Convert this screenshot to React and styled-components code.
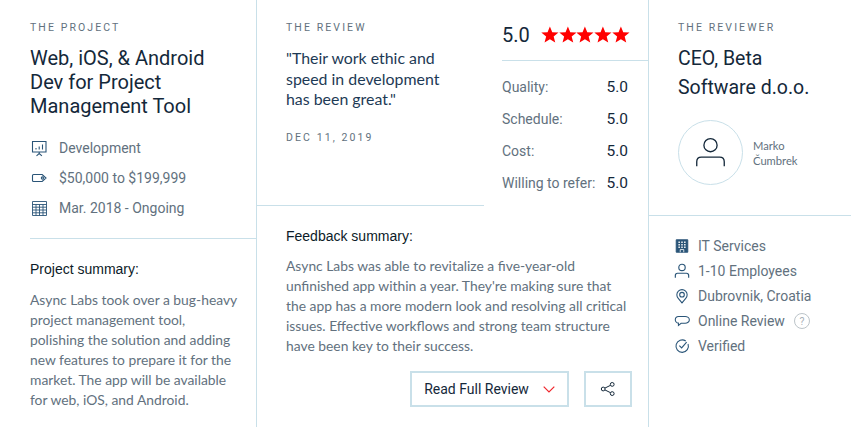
import React from 'react'
import styled, { createGlobalStyle } from 'styled-components'

const Global = createGlobalStyle`
  html, body { margin: 0; padding: 0; background: #fff; }
  body { font-family: Roboto, sans-serif; overflow: hidden; text-rendering: optimizeLegibility; }
`

const LINE = '#c9e0e9'
const INK = '#14283a'
const GREY = '#62717e'
const BLUE = '#2a5578'

const Page = styled.div`
  width: 851px;
  height: 427px;
  display: flex;
  overflow: hidden;
`

const Column = styled.section`
  width: ${p => p.$width}px;
  flex: none;
  border-right: ${p => (p.$last ? 'none' : `1px solid ${LINE}`)};
  box-sizing: border-box;
`

const Block = styled.div`
  padding: ${p => p.$pad};
  border-bottom: ${p => (p.$line ? `1px solid ${LINE}` : 'none')};
  margin: ${p => p.$margin || 0};
`

const Eyebrow = styled.div`
  font-size: 10.5px;
  line-height: 14px;
  letter-spacing: 2.1px;
  color: ${GREY};
  text-transform: uppercase;
`

const Title = styled.h2`
  margin: ${p => p.$top}px 0 0;
  font-weight: 400;
  font-size: ${p => p.$size}px;
  line-height: ${p => p.$leading}px;
  color: ${INK};
`

const Facts = styled.ul`
  list-style: none;
  margin: ${p => p.$margin || 0};
  padding: 0;
  display: flex;
  flex-direction: column;
  gap: ${p => p.$gap}px;
`

const Fact = styled.li`
  display: flex;
  align-items: center;
  gap: ${p => p.$gap}px;
  height: 20px;
  font-size: 14px;
  color: ${GREY};
  white-space: nowrap;
  svg { flex: none; }
`

const SubHead = styled.h3`
  margin: 0;
  font-family: "Liberation Sans", Arial, sans-serif;
  font-weight: 400;
  font-size: 14px;
  line-height: 20px;
  color: #0c1b28;
`

const Body = styled.p`
  margin: ${p => p.$margin};
  font-family: Lato, sans-serif;
  font-size: 13.85px;
  line-height: 20px;
  color: ${GREY};
`

const ReviewTop = styled.div`
  display: flex;
  height: 206px;
`

const QuoteSide = styled.div`
  width: 227px;
  flex: none;
  box-sizing: border-box;
  padding: 21px 28px 0 29px;
  height: 206px;
  border-bottom: 1px solid ${LINE};
`

const Quote = styled.blockquote`
  margin: 13px 0 0;
  font-family: Lato, sans-serif;
  font-size: 15.9px;
  line-height: 20.5px;
  color: #1d3a55;
`

const ReviewDate = styled.div`
  margin-top: 21px;
  font-size: 10.5px;
  line-height: 14px;
  letter-spacing: 2.1px;
  color: ${GREY};
`

const RatingSide = styled.div`
  flex: 1;
  padding-left: 18px;
`

const Overall = styled.div`
  height: 61px;
  box-sizing: border-box;
  padding-top: 10px;
  display: flex;
  align-items: center;
  gap: 11px;
  font-size: 20px;
  color: ${INK};
  border-bottom: 1px solid ${LINE};
`

const Stars = styled.div`
  display: flex;
`

const Scores = styled.div`
  margin-top: 10px;
  display: flex;
  flex-direction: column;
`

const Score = styled.div`
  width: 126px;
  height: 32px;
  display: flex;
  align-items: center;
  justify-content: space-between;
  font-size: 14px;
  color: ${GREY};
  white-space: nowrap;
  b {
    font-weight: 400;
    font-size: 15.5px;
    color: ${INK};
  }
`

const Actions = styled.div`
  display: flex;
  justify-content: flex-end;
  gap: 15px;
  margin-top: 15px;
`

const Action = styled.button`
  height: 36px;
  width: ${p => p.$width}px;
  box-sizing: border-box;
  border: 2px solid ${LINE};
  background: #fff;
  padding: 0;
  display: flex;
  align-items: center;
  justify-content: center;
  gap: 14px;
  font-family: Roboto, sans-serif;
  font-size: 14px;
  color: ${INK};
`

const Person = styled.div`
  display: flex;
  align-items: center;
  gap: 10px;
  margin-top: 18px;
`

const Avatar = styled.div`
  width: 65px;
  height: 65px;
  box-sizing: border-box;
  border: 1px solid ${LINE};
  border-radius: 50%;
  display: flex;
  align-items: center;
  justify-content: center;
`

const PersonName = styled.div`
  font-family: Lato, sans-serif;
  font-size: 11.2px;
  line-height: 15px;
  color: ${GREY};
`

const Help = styled.span`
  width: 16px;
  height: 16px;
  margin-left: 1px;
  box-sizing: border-box;
  border: 1px solid #bcc4c9;
  border-radius: 50%;
  display: inline-flex;
  align-items: center;
  justify-content: center;
  font-size: 10.5px;
  color: #a8b0b6;
`

const Svg = ({ size = 18, stroke = BLUE, width = 1.1, children }) => (
  <svg width={size} height={size} viewBox="0 0 18 18" fill="none" stroke={stroke} strokeWidth={width} aria-hidden="true">
    {children}
  </svg>
)

const BoardIcon = () => (
  <Svg>
    <path d="M2 2.5h14.5M2.5 2.5v10.5h13.5V2.5M9.2 13v1.5M6.5 16.8l2.7-2.3 2.7 2.3" />
    <path d="M6 10.5V9M9.2 10.5V7.5M12.5 10.5V5.5" />
  </Svg>
)
const TagIcon = () => (
  <Svg>
    <path d="M12.2 5.5H3.5q-1 0-1 1v5q0 1 1 1h8.7l3.8-3.5z" />
    <circle cx="12.4" cy="9" r="1.1" />
  </Svg>
)
const CalendarIcon = () => (
  <Svg>
    <path d="M2.5 2.5h14v14h-14zM2.5 5.5h14M2.5 8.2h14M2.5 11h14M2.5 13.8h14M6 5.5v11M9.5 5.5v11M13 5.5v11" strokeWidth="0.9" />
  </Svg>
)
const BuildingIcon = () => (
  <Svg size={16}>
    <path d="M2.5 2h13v14h-13z" fill={BLUE} />
    <path d="M5 4.8h1.6M8.2 4.8h1.6M11.4 4.8H13M5 7.6h1.6M8.2 7.6h1.6M11.4 7.6H13M5 10.4h1.6M8.2 10.4h1.6M11.4 10.4H13" stroke="#fff" strokeWidth="1.6" />
    <path d="M7 16v-3h4v3" stroke="#fff" strokeWidth="0.9" />
  </Svg>
)
const UserIcon = ({ size = 16, width = 1.3, stroke = BLUE }) => (
  <Svg size={size} width={width} stroke={stroke}>
    <circle cx="9" cy="5" r="3.6" />
    <path d="M1.5 16.5V14c0-1.5 1-2.5 2.5-2.5h10c1.5 0 2.5 1 2.5 2.5v2.5" />
  </Svg>
)
const PinIcon = () => (
  <Svg size={16} width={1.2}>
    <path d="M9 16.8 4.8 11.6a5.8 5.8 0 1 1 8.4 0z" />
    <circle cx="9" cy="7.5" r="2.6" />
  </Svg>
)
const ChatIcon = () => (
  <Svg size={16} width={1.2}>
    <path d="M5.5 4h7a3.8 3 0 0 1 0 7.5H8L5 14v-2.6A3.8 3.7 0 0 1 5.5 4z" />
  </Svg>
)
const CheckIcon = () => (
  <Svg size={16} width={1.2}>
    <path d="M15.8 6.8a7 7 0 1 1-2.6-3.4" />
    <path d="m6 8.6 2.6 2.6 5.6-6.6" />
  </Svg>
)
const Star = () => (
  <svg width="17.8" height="17.8" viewBox="0 0 18 18" aria-hidden="true">
    <path fill="#ff0000" d="M9 .5l2.4 5.8 6.3.4-4.9 4 1.6 6.1L9 13.5l-5.4 3.3 1.6-6.1-4.9-4 6.3-.4z" />
  </svg>
)
const Chevron = () => (
  <svg width="12" height="7" viewBox="0 0 12 7" fill="none" stroke="#f0262c" strokeWidth="1.2" aria-hidden="true">
    <path d="m.7.7 5.3 5.3L11.3.7" />
  </svg>
)
const ShareIcon = () => (
  <svg width="16" height="16" viewBox="0 0 16 16" fill="none" stroke={INK} strokeWidth="1" aria-hidden="true">
    <circle cx="3.2" cy="8" r="1.9" />
    <circle cx="12.2" cy="3.4" r="1.9" />
    <circle cx="12.2" cy="12.6" r="1.9" />
    <path d="m4.9 7.1 5.6-2.8M4.9 8.9l5.6 2.8" />
  </svg>
)

const projectFacts = [
  [BoardIcon, 'Development'],
  [TagIcon, '$50,000 to $199,999'],
  [CalendarIcon, 'Mar. 2018 - Ongoing'],
]

const scores = [
  ['Quality:', '5.0'],
  ['Schedule:', '5.0'],
  ['Cost:', '5.0'],
  ['Willing to refer:', '5.0'],
]

const App = () => (
  <Page>
    <Global />
    <Column $width={257}>
      <Block $pad="21px 0 20px" $margin="0 0 0 30px" $line>
        <Eyebrow>The Project</Eyebrow>
        <Title $top={11} $size={20} $leading={24}>Web, iOS, &amp; Android<br />Dev for Project<br />Management Tool</Title>
        <Facts $margin="20px 0 0" $gap={10}>
          {projectFacts.map(([Icon, label]) => (
            <Fact key={label} $gap={11}><Icon />{label}</Fact>
          ))}
        </Facts>
      </Block>
      <Block $pad="20px 16px 0 30px">
        <SubHead>Project summary:</SubHead>
        <Body $margin="11px 0 0">
          Async Labs took over a bug-heavy project management tool, polishing the solution and adding new features to prepare it for the market. The app will be available for web, iOS, and Android.
        </Body>
      </Block>
    </Column>

    <Column $width={392}>
      <ReviewTop>
        <QuoteSide>
          <Eyebrow>The Review</Eyebrow>
          <Quote>"Their work ethic and speed in development has been great."</Quote>
          <ReviewDate>DEC 11, 2019</ReviewDate>
        </QuoteSide>
        <RatingSide>
          <Overall>
            5.0
            <Stars>
              <Star /><Star /><Star /><Star /><Star />
            </Stars>
          </Overall>
          <Scores>
            {scores.map(([label, value]) => (
              <Score key={label}>{label}<b>{value}</b></Score>
            ))}
          </Scores>
        </RatingSide>
      </ReviewTop>
      <Block $pad="20px 16px 0 29px">
        <SubHead>Feedback summary:</SubHead>
        <Body $margin="10px 0 0">
          Async Labs was able to revitalize a five-year-old unfinished app within a year. They're making sure that the app has a more modern look and resolving all critical issues. Effective workflows and strong team structure have been key to their success.
        </Body>
        <Actions>
          <Action $width={159}>Read Full Review <Chevron /></Action>
          <Action $width={48}><ShareIcon /></Action>
        </Actions>
      </Block>
    </Column>

    <Column $width={202} $last>
      <Block $pad="21px 0 0 29px">
        <Eyebrow>The Reviewer</Eyebrow>
        <Title $top={9} $size={19.5} $leading={29}>CEO, Beta<br />Software d.o.o.</Title>
        <Person>
          <Avatar><UserIcon size={33} width={0.72} stroke={INK} /></Avatar>
          <PersonName>Marko<br />Čumbrek</PersonName>
        </Person>
      </Block>
      <Block $pad="0" $margin="30px 0 0" $line />
      <Facts $margin="20px 0 0 25px" $gap={5}>
        <Fact $gap={8}><BuildingIcon />IT Services</Fact>
        <Fact $gap={8}><UserIcon />1-10 Employees</Fact>
        <Fact $gap={8}><PinIcon />Dubrovnik, Croatia</Fact>
        <Fact $gap={8}><ChatIcon />Online Review <Help>?</Help></Fact>
        <Fact $gap={8}><CheckIcon />Verified</Fact>
      </Facts>
    </Column>
  </Page>
)

export default App
